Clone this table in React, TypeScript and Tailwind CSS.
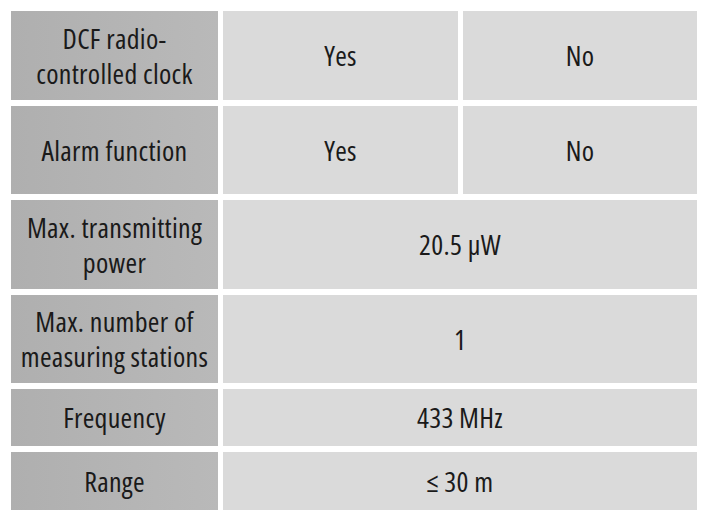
const cellText = "flex items-center justify-center text-center font-['Open_Sans',sans-serif] text-[28px] leading-[35px] font-normal font-stretch-condensed tracking-[0.3px] text-[#1a1a1a]"
const labelCell = `${cellText} bg-linear-to-r from-[#afafaf] to-[#b9b9b9]`
const valueCell = `${cellText} bg-[#dadada]`

export default function App() {
  return (
    <div className="h-[516px] w-[708px] bg-white pl-[11px] pt-[11px]">
      <div className="grid grid-cols-[207px_235px_234px] grid-rows-[89px_88px_89px_88px_57px_58px] gap-x-[5px] gap-y-[6px]">
        <div className={labelCell}>
          DCF radio-
          <br />
          controlled clock
        </div>
        <div className={valueCell}>Yes</div>
        <div className={valueCell}>No</div>

        <div className={labelCell}>Alarm function</div>
        <div className={valueCell}>Yes</div>
        <div className={valueCell}>No</div>

        <div className={labelCell}>
          Max. transmitting
          <br />
          power
        </div>
        <div className={`${valueCell} col-span-2`}>20.5 µW</div>

        <div className={labelCell}>
          Max. number of
          <br />
          measuring stations
        </div>
        <div className={`${valueCell} col-span-2`}>1</div>

        <div className={labelCell}>Frequency</div>
        <div className={`${valueCell} col-span-2`}>433 MHz</div>

        <div className={labelCell}>Range</div>
        <div className={`${valueCell} col-span-2`}>≤ 30 m</div>
      </div>
    </div>
  )
}
